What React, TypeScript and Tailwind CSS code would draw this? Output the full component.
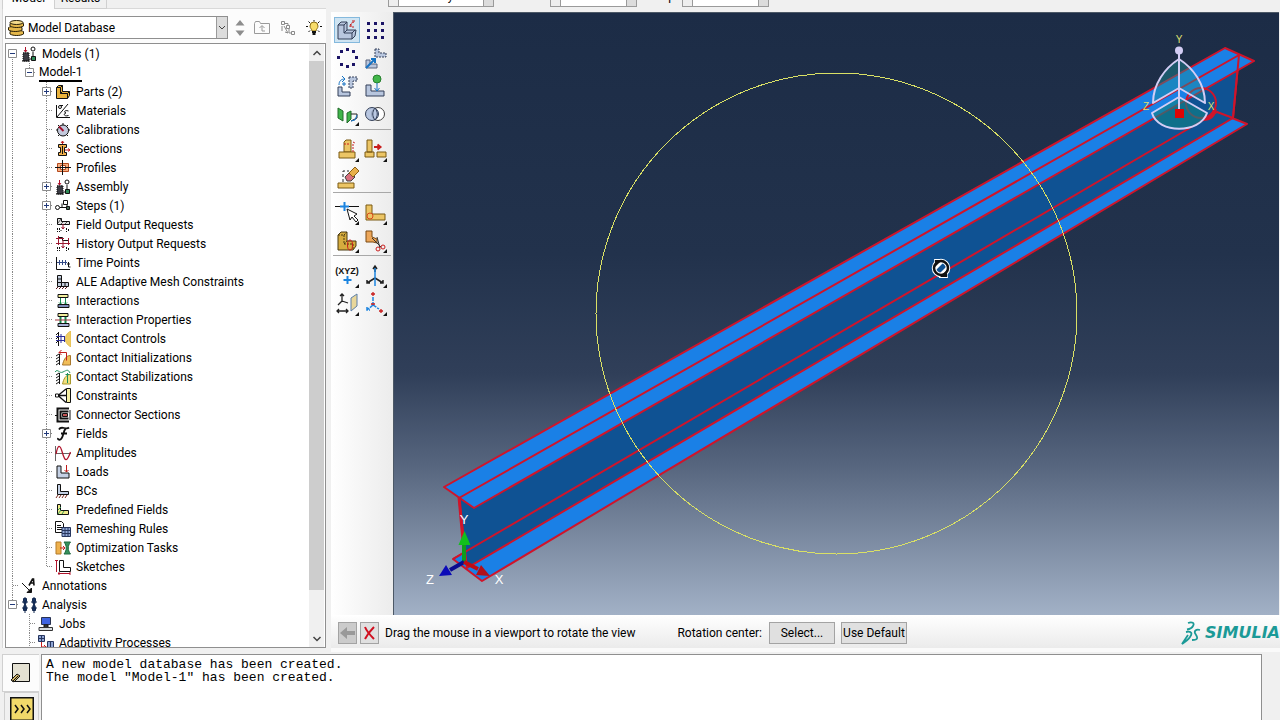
import type { ReactNode } from "react";

const ELL = "M2 2h4v7h8v5H2z";

function Svg16({ children }: { children: ReactNode }) {
  return (
    <svg className="size-4 shrink-0" viewBox="0 0 16 16" fill="none" stroke="#111" aria-hidden="true">
      {children}
    </svg>
  );
}

const assemblyArt = (
  <>
    <path d="M2 7h6v8H2z" fill="#667" strokeDasharray="1 1" />
    <path d="M1 15h8M3 15V6M5 15V6M7 15V6" />
    <path d="M4.500 1v5M3 4l1.500 2L6 4" stroke="#b0122c" />
    <path d="M12 6v5M8 13h3" />
    <circle cx="12" cy="3" r="2" fill="#fff" />
    <path d="M10.500 10.500h4v4h-4z" fill="#2e8b57" />
  </>
);

const analysisArt = (
  <g fill="#1c3f78" stroke="#13294f">
    <path d="M2.500 1.500h3v3l-1 3 1 3v3h-3v-3l1-3-1-3zM1 5h6M1 11h6" />
    <path d="M11.500 1.500h3v3l-1 3 1 3v3h-3v-3l1-3-1-3zM10 5h6M10 11h6M13 0v16M4 0v16" />
  </g>
);

const contactWall = <path d="M4.500 4v11M1 6l3-2M1 9l3-2M1 12l3-2M1 15l3-2" />;

// One 16px glyph for each kind of container in the model tree
const treeIcons: Record<string, ReactNode> = {
  models: assemblyArt,
  assembly: assemblyArt,
  parts: (
    <>
      <path d="M1.500 3.500l2-2h4v6h7v4l-2 3h-11z" fill="#e9b23c" />
      <path d="M1.500 3.500h4v6h7v5M5.500 3.500l2-2M12.500 9.500l2-2M5.500 9.500l2-2" />
    </>
  ),
  materials: (
    <>
      <path d="M1.500 2v12.500H15M2 14L13 1" />
      <circle cx="5" cy="4" r="1.500" />
      <path d="M5 2.500h3M13.500 8c-4-1.500-5 1.500-2.500 2-3 .5-2 4 2.500 2.500" />
    </>
  ),
  calibrations: (
    <>
      <circle cx="8" cy="8.500" r="5.500" fill="#c3c9dc" />
      <path d="M8 1v2M1 8h2M13 8h2M3 3l1.500 1.500M13 3l-1.500 1.500M3 14l1.500-1.500M13 14l-1.500-1.500" />
      <path d="M4 4.500l4.500 4.500" stroke="#a3102c" strokeWidth="2" />
    </>
  ),
  sections: (
    <>
      <path d="M3.500 3.500h8v3h-2v5h2v3h-8v-3h2v-5h-2z" fill="#f3b04a" />
      <path d="M7.500 0v3M6 2l1.500-2L9 2M10 9h5M13 7.500L15 9l-2 1.500" stroke="#c02020" />
      <path d="M7.500 5v8" />
    </>
  ),
  profiles: (
    <>
      <path d="M2.500 3.500h11v8h-11z" fill="#f4b183" stroke="#b5481c" />
      <path d="M5.500 5.500h5v4h-5z" fill="#fff" stroke="#b5481c" />
      <path d="M7.500 0v15M0 7.500h16" />
    </>
  ),
  steps: (
    <>
      <path d="M5 9.500h6M7 9V5.500M12 6v3" />
      <circle cx="2.500" cy="9.500" r="2" fill="#fff" />
      <path d="M8.500 2.500h4v4h-4z" fill="#fff" />
      <path d="M11.500 8.500h3v3h-3z" fill="#456b56" />
    </>
  ),
  fieldOutput: (
    <>
      <path d="M2.500 1.500h4v3h8v3h-12z" fill="#e2e2e2" />
      <path d="M3 6l3-4M6 7l2-2M10 7l2-2" stroke="#555" />
      <path d="M8 7v5M6.500 10L8 12l1.500-2" stroke="#9c1730" />
      <path d="M2.500 11v4M4.500 11v4M11.500 11v4M13.500 12v2M5.500 13.500h1" strokeDasharray="2 1" />
    </>
  ),
  historyOutput: (
    <>
      <path d="M3.500 1.500v6h10v-3h-6v-3z" />
      <path d="M1 2.500h8M3.500 0v9M8 4v8M6.500 10L8 12l1.500-2M1 7.500h14M13.500 2v7" stroke="#9c1730" />
      <path d="M2.500 11v4M4.500 11v4M11.500 11v4M13.500 12v2" strokeDasharray="2 1" />
    </>
  ),
  timePoints: (
    <>
      <path d="M1.500 2v12.500H15" />
      <path d="M2 7.500h10M4.500 5v5M7.500 5v5M10.500 5v5" stroke="#334a86" />
      <path d="M13.500 7v5h2M12 9h3" />
    </>
  ),
  ale: (
    <>
      <path d="M2.500 1.500h4v7h7v4h-11z" fill="#c5cfdf" />
      <path d="M2.500 5h4M2.500 8.500h4M6.500 8.500v4M10 8.500v4" />
      <path d="M1 15l2-2M4 15l2-2M7 15l2-2M10 15l2-2" stroke="#5b1720" />
    </>
  ),
  interactions: (
    <>
      <path d="M3 1.500h10v3H3z" fill="#f2ee9c" />
      <path d="M5.500 5v6M10.500 5v6M4 9.500l1.500 1.500L7 9.500M9 9.500l1.500 1.500 1.500-1.500" stroke="#158a4c" />
      <path d="M3 11.500h11v3H3z" fill="#7f8db9" />
    </>
  ),
  interactionProps: (
    <>
      <path d="M3 1.500h10v3H3z" fill="#f2ee9c" />
      <path d="M5.500 5v6M10.500 5v6" stroke="#158a4c" strokeWidth="2" />
      <path d="M3 11.500h11v3H3z" fill="#a9b2d6" />
      <path d="M0 8h16" stroke="#a0343c" />
    </>
  ),
  contactControls: (
    <>
      <path d="M16 0c-7 3-8 12 0 16z" fill="#f0cd62" stroke="#e2ba4e" />
      <path d="M3.500 1v14M1 4l2-2M1 8l2-2M1 12l2-2" />
      <path d="M1 5.500h9M1 9.500h9M6 3v9M9.500 5v6" stroke="#2d2f9a" />
    </>
  ),
  contactInit: (
    <>
      <path d="M15.500 5.500c-5 0-7 5-8 9.500h8z" fill="#f0bd58" stroke="#a8772c" />
      {contactWall}
      <path d="M4 2.500h7.500v8M6.500 0L4 2.500 6.500 5" stroke="#c21d1d" />
    </>
  ),
  contactStab: (
    <>
      <path d="M15.500 5.500c-5 0-7 5-8 9.500h8z" fill="#f2e07e" stroke="#a8972c" />
      {contactWall}
      <path d="M0 3c3-4 4 2 8 0s5-3 7 1M12.500 4v10M10.500 5.500h4" stroke="#1f8f5c" />
    </>
  ),
  constraints: (
    <>
      <path d="M11.500.5h4v14h-4z" fill="#f5efa4" />
      <path d="M11 1L3 7.500l8 7M4 7.500h7" strokeWidth="1.300" />
      <path d="M.5 6h3v3h-3z" fill="#fff" />
    </>
  ),
  connector: (
    <>
      <path d="M14 1.500H2.500v13H14M13.500 4.500H5.500v7h8" strokeWidth="2" />
      <path d="M0 8.500h3M15 3v10" />
      <path d="M7.500 6.500h5v3h-5z" fill="#c35454" />
    </>
  ),
  fields: (
    <path d="M4 3.500c1-2 3-2 5-1.500s4 .5 5-.5M11 2C8 5 8.500 12 5.500 13.500c-1.500.7-3-.2-2.500-1.500M6 7.500h6" strokeWidth="1.800" />
  ),
  amplitudes: (
    <>
      <path d="M.5 1v15M0 8.500h16" stroke="#666" />
      <path d="M1 9C3-1 5-1 7.500 8S12 17 15.500 7" stroke="#b0142c" strokeWidth="1.300" />
    </>
  ),
  loads: (
    <>
      <path d={ELL} fill="#c4d0e4" />
      <path d="M11.500 1v7M9.500 6l2 2 2-2" stroke="#c11a1a" />
    </>
  ),
  bcs: (
    <>
      <path d="M2.500 1.500h3v7h8v3h-11z" fill="#c4d0e4" />
      <path d="M1 15l2-3M4 15l2-3M7 15l2-3M10 15l2-3" stroke="#7b2a20" />
    </>
  ),
  predefined: (
    <>
      <path d="M2.500 2.500h3v6h8v4h-11z" fill="#efe98a" />
      <path d="M3 8l3-3M3 12l3-4M7 12l2-3" stroke="#3a9a54" />
    </>
  ),
  remeshing: (
    <>
      <path d="M.5.5h6l2 2v9h-8z" fill="#fff" />
      <path d="M2 4.500h4M2 6.500h5M2 8.500h5" />
      <path d="M7 6.500h8.500v9H7zM10 6.500v9M13 6.500v9M7 9.500h8.500M7 12.500h8.500" fill="#8fa5d4" stroke="#27365e" />
    </>
  ),
  optimization: (
    <>
      <path d="M1 2h5v12H1z" fill="#eeb14d" stroke="#b37b28" />
      <path d="M5 8h5M8 6l2 2-2 2" stroke="#c81d1d" />
      <path d="M9 2h6.500c-3 4-3 8 0 12H9c3-4 3-8 0-12z" fill="#35915c" stroke="#206a40" />
    </>
  ),
  sketches: (
    <>
      <path d="M4.500 1.500h4v7h7v4h-11z" fill="#fff" />
      <path d="M1.500 1v12M0 1.500h3M3 14.500h12M4 13v3M15 13v3" stroke="#b0142c" />
    </>
  ),
  annotations: (
    <>
      <path d="M1 5l9 9M10.500 10v4.500H6z" fill="#111" />
      <path d="M8 7.500L11.500 1h1l.5 6.500M9 5h4" strokeWidth="1.600" />
    </>
  ),
  analysis: analysisArt,
  jobs: (
    <>
      <path d="M3.500 1.500h9v7h-9z" fill="#3f63e0" stroke="#2a3350" />
      <path d="M6 9h4v2H6z" fill="#555" />
      <path d="M1 11.500h13.500v3H1z" fill="#d9dde0" stroke="#333" />
    </>
  ),
  adaptivity: (
    <>
      <path d="M.5.5h6v6h-6zM3.500.5v6M.5 3.500h6M9.500 6.500h6v6h-6zM12.500 6.500v6" fill="#8fa5d4" stroke="#27365e" />
      <path d="M3.500 7v5h5M6 10l2 2-2 2" stroke="#c81d1d" />
    </>
  ),
};

// Guide cells: "|" line passing by, "." nothing, "b" starts here, "t" branches, "l" last branch
type Row = { guides: string; label: string; icon?: string; state?: "open" | "closed"; current?: boolean };

const rows: Row[] = [
  { guides: "b", label: "Models (1)", icon: "models", state: "open" },
  { guides: "|l", label: "Model-1", state: "open", current: true },
  { guides: "|.t", label: "Parts (2)", icon: "parts", state: "closed" },
  { guides: "|.t", label: "Materials", icon: "materials" },
  { guides: "|.t", label: "Calibrations", icon: "calibrations" },
  { guides: "|.t", label: "Sections", icon: "sections" },
  { guides: "|.t", label: "Profiles", icon: "profiles" },
  { guides: "|.t", label: "Assembly", icon: "assembly", state: "closed" },
  { guides: "|.t", label: "Steps (1)", icon: "steps", state: "closed" },
  { guides: "|.t", label: "Field Output Requests", icon: "fieldOutput" },
  { guides: "|.t", label: "History Output Requests", icon: "historyOutput" },
  { guides: "|.t", label: "Time Points", icon: "timePoints" },
  { guides: "|.t", label: "ALE Adaptive Mesh Constraints", icon: "ale" },
  { guides: "|.t", label: "Interactions", icon: "interactions" },
  { guides: "|.t", label: "Interaction Properties", icon: "interactionProps" },
  { guides: "|.t", label: "Contact Controls", icon: "contactControls" },
  { guides: "|.t", label: "Contact Initializations", icon: "contactInit" },
  { guides: "|.t", label: "Contact Stabilizations", icon: "contactStab" },
  { guides: "|.t", label: "Constraints", icon: "constraints" },
  { guides: "|.t", label: "Connector Sections", icon: "connector" },
  { guides: "|.t", label: "Fields", icon: "fields", state: "closed" },
  { guides: "|.t", label: "Amplitudes", icon: "amplitudes" },
  { guides: "|.t", label: "Loads", icon: "loads" },
  { guides: "|.t", label: "BCs", icon: "bcs" },
  { guides: "|.t", label: "Predefined Fields", icon: "predefined" },
  { guides: "|.t", label: "Remeshing Rules", icon: "remeshing" },
  { guides: "|.t", label: "Optimization Tasks", icon: "optimization" },
  { guides: "|.l", label: "Sketches", icon: "sketches" },
  { guides: "t", label: "Annotations", icon: "annotations" },
  { guides: "l", label: "Analysis", icon: "analysis", state: "open" },
  { guides: ".t", label: "Jobs", icon: "jobs" },
  { guides: ".t", label: "Adaptivity Processes", icon: "adaptivity" },
];

const guidePaths: Record<string, string> = {
  "|": "M6.500 0V19",
  ".": "",
  b: "M6.500 9V19",
  t: "M6.500 0V19M7 9.500H13",
  l: "M6.500 0V9M7 9.500H13",
};

function TreeRow({ row }: { row: Row }) {
  const cells = row.guides.split("");
  return (
    <li className="flex h-[19px] items-center" role="treeitem" aria-expanded={row.state ? row.state === "open" : undefined}>
      {cells.map((kind, i) => {
        const own = i === cells.length - 1;
        return (
          <span key={i} className={own ? "relative h-[19px] w-[15px] shrink-0" : "h-[19px] w-[17px] shrink-0"}>
            <svg className="block h-[19px] w-[15px]" viewBox="0 0 15 19" aria-hidden="true">
              <path d={guidePaths[kind]} stroke="#888" strokeDasharray="1 1" fill="none" />
            </svg>
            {own && row.state && (
              <button
                type="button"
                aria-label={row.state === "open" ? `Collapse ${row.label}` : `Expand ${row.label}`}
                className="absolute top-[5px] left-[2px] size-[9px] bg-white"
              >
                <svg className="block size-[9px]" viewBox="0 0 9 9" fill="none">
                  <path d="M.5.5h8v8h-8z" stroke="#8c8c8c" />
                  <path d={row.state === "open" ? "M2 4.500h5" : "M2 4.500h5M4.500 2v5"} stroke="#223a7a" />
                </svg>
              </button>
            )}
          </span>
        );
      })}
      {row.icon && <Svg16>{treeIcons[row.icon]}</Svg16>}
      <span className={row.current ? "ml-px border-b-2 border-black leading-4" : "ml-[5px] leading-4"}>{row.label}</span>
    </li>
  );
}

function ModelTree() {
  return (
    <div className="ml-0.5 flex min-h-0 flex-1 border border-[#8f8f8f] bg-white">
      <ul className="min-h-0 flex-1 overflow-hidden whitespace-nowrap" role="tree" aria-label="Model tree">
        {rows.map((row) => (
          <TreeRow key={row.label} row={row} />
        ))}
      </ul>
      <div className="mr-px flex w-[15px] flex-col bg-[#f0f0f0]">
        <button type="button" aria-label="Scroll up" className="grid h-[17px] place-items-center">
          <svg className="h-2 w-2.5" viewBox="0 0 10 8" fill="none" stroke="#444" strokeWidth="1.500">
            <path d="M1.500 6L5 2.500 8.500 6" />
          </svg>
        </button>
        <div className="min-h-0 flex-1">
          <div className="h-[93%] bg-[#cdcdcd]" />
        </div>
        <button type="button" aria-label="Scroll down" className="grid h-[17px] place-items-center">
          <svg className="h-2 w-2.5" viewBox="0 0 10 8" fill="none" stroke="#444" strokeWidth="1.500">
            <path d="M1.500 2L5 5.500 8.500 2" />
          </svg>
        </button>
      </div>
    </div>
  );
}

function DatabaseBar() {
  return (
    <div className="flex items-center px-0.5 pt-[7px] pb-1">
      <div className="flex h-[23px] w-[223px] shrink-0 items-center border border-[#8f8f8f] bg-white pl-0.5">
        <svg className="size-4 shrink-0" viewBox="0 0 16 16" fill="#e4b74a" stroke="#2a2008" aria-hidden="true">
          <path d="M2 11.500c2-1.500 11-1.500 13.500 0v2.500c-3 2-10.500 2-13.500 0z" />
          <path d="M.5 7.500c2-1.500 11-1.500 13.500 0V10c-3 2-10.500 2-13.500 0z" />
          <path d="M2 3.500c2-1.500 11-1.500 13.500 0V6c-3 2-10.500 2-13.500 0z" />
          <ellipse cx="8.500" cy="2.500" rx="6.500" ry="2" fill="#f5dc8c" />
        </svg>
        <select aria-label="Tree root" className="h-full min-w-0 flex-1 appearance-none bg-white pl-1 outline-none">
          <option>Model Database</option>
        </select>
        <span className="grid h-full w-[11px] place-items-center border-l border-[#9a9a9a] bg-[#dcdcdc]">
          <svg className="h-1.5 w-2" viewBox="0 0 8 6" fill="none" stroke="#444">
            <path d="M1 1l3 3 3-3" />
          </svg>
        </span>
      </div>
      <button type="button" aria-label="Move up or down" className="ml-1 grid size-4 place-items-center">
        <svg className="h-4 w-2.5" viewBox="0 0 10 16" fill="#8d8d8d">
          <path d="M5 0l4.500 5.500h-9zM5 16l4.500-5.500h-9z" />
        </svg>
      </button>
      <button type="button" aria-label="Up one level" className="ml-1.5 size-4">
        <svg className="size-4" viewBox="0 0 16 16" fill="none" stroke="#9a9a9a">
          <path d="M.5 3.500l1-2h4l1 2h9v10H.5zM8 11V6M5.500 8L8 5.500 10.500 8M8 11h3" />
        </svg>
      </button>
      <button type="button" aria-label="Filter" className="ml-2.5 size-4">
        <svg className="size-4" viewBox="0 0 16 16" fill="none" stroke="#8a8a8a">
          <path d="M1.500 1.500h3v3h-3zM6.500 5.500h3v3h-3zM11.500 11.500h3v3h-3zM4.500 3.500H8v2M9 8.500v4.500h2.500M2 6v5M4 6l4 7M8 13l-3-1" />
        </svg>
      </button>
      <button type="button" aria-label="Tips" className="ml-2.5 size-4">
        <svg className="size-4" viewBox="0 0 16 16" fill="none" stroke="#111">
          <path d="M8 0v1.500M0 6.500h2M14 6.500h2M2.500 1.500l1.500 1.500M13.500 1.500L12 3M2.500 12L4 10.500M13.500 12L12 10.500" />
          <path d="M6 11c0-2-2-2.500-2-5a4 4 0 018 0c0 2.500-2 3-2 5z" fill="#f7dc6a" stroke="#8a6c14" />
          <path d="M6 12h4M6.500 14h3" strokeWidth="2" />
        </svg>
      </button>
    </div>
  );
}

function Sidebar() {
  return (
    <aside className="flex w-[331px] shrink-0 flex-col pr-[5px] pl-0.5">
      <div className="flex h-[9px] items-end overflow-hidden" role="tablist">
        <button type="button" role="tab" aria-selected="true" className="h-5 w-[52px] shrink-0 border-l border-[#d0d0d0] bg-[#fcfcfc] pb-0.5 leading-4">
          Model
        </button>
        <button type="button" role="tab" aria-selected="false" className="h-5 w-[53px] shrink-0 border-r border-b border-l border-[#d0d0d0] bg-[#f0f0f0] pb-0.5 leading-4">
          Results
        </button>
        <span className="h-px flex-1 bg-[#d9d9d9]" />
      </div>
      <div className="mb-1 flex min-h-0 flex-1 flex-col border-l border-[#d9d9d9] bg-[#fcfcfc]">
        <DatabaseBar />
        <ModelTree />
      </div>
    </aside>
  );
}

type ContextSelectProps = { label: string; value: string; labelWidth: string; boxWidth: string };

function ContextSelect({ label, value, labelWidth, boxWidth }: ContextSelectProps) {
  return (
    <label className="flex shrink-0 items-center gap-1">
      <span className={`${labelWidth} text-right`}>{label}</span>
      <span className={`${boxWidth} flex h-[22px] border border-[#9a9a9a] bg-white`}>
        <span className="grid w-2.5 place-items-end border-r border-[#9a9a9a] bg-[#eee] pb-1">
          <svg className="h-1.5 w-2" viewBox="0 0 8 6">
            <path d="M1 0h6L4 4z" fill="#222" />
          </svg>
        </span>
        <select className="min-w-0 flex-1 appearance-none bg-transparent px-0.5 outline-none">
          <option>{value}</option>
        </select>
        <span className="w-2.5 border-l border-[#9a9a9a] bg-[#dcdcdc]" />
      </span>
    </label>
  );
}

function ContextBar() {
  return (
    <div className="flex h-3 items-end overflow-hidden bg-[#f0f0f0] pb-[5px]">
      <ContextSelect label="Module:" value="Assembly" labelWidth="w-[53px]" boxWidth="w-[106px]" />
      <ContextSelect label="Model:" value="Model-1" labelWidth="w-[52px]" boxWidth="w-[87px]" />
      <ContextSelect label="Step:" value="Initial" labelWidth="w-[41px]" boxWidth="w-[87px]" />
    </div>
  );
}

const more = <path d="M24 20v4h-4z" fill="#111" stroke="none" />;
const steel = "#b8c6de";
const gold = "#ecc565";

type Tool = { name: string; art: ReactNode; active?: boolean };

const toolGroups: Tool[][] = [
  [
    {
      name: "Create Instance",
      active: true,
      art: (
        <>
          <path d="M3 7l3-3h6v8h9l-1 6-3 3H3z" fill={steel} stroke="#333f58" />
          <path d="M3 7h6v8h8v6M9 7l3-3M9 15l3-3M17 15l3-3" stroke="#333f58" />
          <path d="M15 9c0-3 1-4 4-5M16 6v3h3M17 3h3" stroke="#c81d1d" strokeDasharray="3 1" />
        </>
      ),
    },
    {
      name: "Linear Pattern",
      art: (
        <g fill="#1b1466" stroke="none">
          {[4, 11, 18].flatMap((y) => [4, 11, 18].map((x) => <rect key={`${x}-${y}`} x={x} y={y} width="3" height="3" />))}
        </g>
      ),
    },
    {
      name: "Radial Pattern",
      art: (
        <g fill="#1b1466" stroke="none">
          {[[11, 2], [17, 4], [20, 10], [17, 17], [11, 19], [5, 17], [2, 10], [5, 4]].map(([x, y]) => (
            <rect key={`${x}-${y}`} x={x} y={y} width="3" height="3" />
          ))}
        </g>
      ),
    },
    {
      name: "Translate Instance",
      art: (
        <>
          <path d="M12 3h4v4h7v4H12z" fill={steel} stroke="#333f58" strokeDasharray="2 1" />
          <path d="M3 14h4v4h7v4H3z" fill={steel} stroke="#56627c" />
          <path d="M3 22l9-9M8 13h4v4" stroke="#1673c4" strokeWidth="2" />
        </>
      ),
    },
    {
      name: "Rotate Instance",
      art: (
        <>
          <path d="M3 13h4v5h8v4H3z" fill={steel} stroke="#333f58" />
          <path d="M14 3h8v4h-4v7h-4z" fill={steel} stroke="#333f58" strokeDasharray="2 1" />
          <path d="M4 11c0-4 2-6 6-6M7 2l3 3-3 3M9 8v4M7 10h4" stroke="#1673c4" />
        </>
      ),
    },
    {
      name: "Translate To",
      art: (
        <>
          <path d="M3 11h5v6h13v5H3z" fill={steel} stroke="#333f58" />
          <circle cx="14" cy="5" r="4" fill="#41b649" stroke="#27802e" />
          <path d="M14 9v7M11.500 14l2.500 3 2.500-3" stroke="#1673c4" />
        </>
      ),
    },
    {
      name: "Create Constraint",
      art: (
        <>
          <path d="M3 6l5 3v10l-5-3z" fill="#3fb54a" stroke="#226b2a" />
          <path d="M12 11l4-2v8l-4 4z" fill="#3fb54a" stroke="#226b2a" />
          <path d="M16 12h6v4l-6 3" stroke="#222" />
          <path d="M22 13l-2 5-4 1" stroke="#1673c4" />
          {more}
        </>
      ),
    },
    {
      name: "Merge/Cut Instances",
      art: (
        <>
          <circle cx="15" cy="12" r="6.500" fill="#fff" stroke="#444" />
          <circle cx="9" cy="12" r="6.500" fill="#a9badb" fillOpacity=".8" stroke="#333f58" />
          <path d="M12 6c-3 4-3 8 0 12M12 6c3 4 3 8 0 12" stroke="#333f58" />
        </>
      ),
    },
  ],
  [
    {
      name: "Create Solid",
      art: (
        <>
          <path d="M9 4l2-2h5v12H9z" fill={gold} stroke="#7a5a14" />
          <path d="M4 14h16v6H4z" fill={gold} stroke="#7a5a14" />
          <path d="M9 6h5M18 6v9M18 4l2 1" stroke="#c81d1d" strokeDasharray="2 1" />
          {more}
        </>
      ),
    },
    {
      name: "Create Cut",
      art: (
        <>
          <path d="M4 2h5v12H4zM2 14h9v5H2zM14 14h9v5h-9z" fill={gold} stroke="#7a5a14" />
          <path d="M11 9h6M14.500 6.500L17.500 9l-3 2.500" stroke="#c81d1d" strokeWidth="2" />
          {more}
        </>
      ),
    },
    {
      name: "Remove Feature",
      art: (
        <>
          <path d="M3 17h16v5H3z" fill={gold} stroke="#7a5a14" />
          <path d="M8 16V5h6" strokeDasharray="3 2" stroke="#222" />
          <path d="M10 11l5-5 5 5-4 4h-4z" fill="#d9707e" stroke="#444" />
          <path d="M14 7l6-6 4 4-6 6z" fill="#e9b04a" stroke="#8a5f18" />
        </>
      ),
    },
  ],
  [
    {
      name: "Partition Edge",
      art: (
        <>
          <path d="M0 5.500h24" stroke="#111" />
          <path d="M9.500 1v9M5 5.500h9" stroke="#1b84e0" strokeWidth="2" />
          <path d="M12 8l3 11 2-3 4 5 2-2-4-4 3-2z" fill="#fff" stroke="#111" />
          {more}
        </>
      ),
    },
    {
      name: "Partition Face",
      art: (
        <>
          <path d="M3 4h6v9h13v6H3z" fill={gold} stroke="#7a5a14" />
          <circle cx="7" cy="15" r="3" stroke="#d8481c" />
          {more}
        </>
      ),
    },
    {
      name: "Partition Cell",
      art: (
        <>
          <path d="M3 6l3-3h6v9h9v5l-3 4H3z" fill="#d6ac3e" stroke="#4b3a10" />
          <path d="M3 6h6v9h9v6M9 6l3-3M9 15l3-3" stroke="#4b3a10" strokeDasharray="2 1" />
          <ellipse cx="15" cy="16" rx="2.500" ry="5" stroke="#c81d1d" />
          {more}
        </>
      ),
    },
    {
      name: "Trim",
      art: (
        <>
          <path d="M3 2h6v6l5 2v4l-4-1H3z" fill="#eda75a" stroke="#7a4a14" />
          <path d="M9 9l9 9M14 8l3 11" stroke="#333" />
          <circle cx="15" cy="20" r="2" stroke="#c81d1d" />
          <circle cx="20" cy="18" r="2" stroke="#c81d1d" />
          {more}
        </>
      ),
    },
  ],
  [
    {
      name: "Create Datum Point",
      art: (
        <>
          <text x="12" y="10" textAnchor="middle" fill="#111" stroke="none" className="font-['Liberation_Sans'] text-[9px] font-bold">
            (XYZ)
          </text>
          <path d="M12.500 12v8M8.500 16h8" stroke="#1b84e0" strokeWidth="2" />
          {more}
        </>
      ),
    },
    {
      name: "Create Datum Axis",
      art: (
        <>
          <path d="M12 14L4 19M12 14l8 5M4 16v3h3M20 16v3h-3M12 8V2M10 5l2-3 2 3" stroke="#222" strokeWidth="1.500" />
          <path d="M12 4v18" stroke="#1b84e0" strokeWidth="1.500" />
          {more}
        </>
      ),
    },
    {
      name: "Create Datum Plane",
      art: (
        <>
          <path d="M7 10V2M5 4l2-2 2 2M7 9l6 2M7 9l-4 4M2 19h11M4 17l-2 2 2 2M11 17l2 2-2 2" stroke="#222" strokeWidth="1.300" />
          <path d="M16 6l6-4v12l-6 5z" fill="#e9d79a" stroke="#5d7fa8" />
          {more}
        </>
      ),
    },
    {
      name: "Create Datum CSYS",
      art: (
        <>
          <path d="M10 13l-6 5M10 13l6 4M4 15v3h3M10 5v8" stroke="#1b84e0" strokeWidth="1.500" strokeDasharray="4 1" />
          <path d="M10 0v4M8 2h4M18 17v4M16 19h4M8 12h4" stroke="#c81d1d" strokeWidth="1.300" />
          {more}
        </>
      ),
    },
  ],
];

function Toolbox() {
  return (
    <div className="w-[62px] shrink-0 divide-y divide-[#a8a8a8] bg-linear-to-r from-white to-[#ececec] px-0.5 pt-1">
      {toolGroups.map((group) => (
        <div key={group[0].name} className="grid grid-cols-[28px_28px] pt-1.5 first:pt-0 first:pb-px">
          {group.map((tool) => (
            <button
              key={tool.name}
              type="button"
              aria-label={tool.name}
              title={tool.name}
              className="grid h-7 place-items-center"
            >
              <svg
                className={tool.active ? "size-[26px] border border-[#84b9dd] bg-[#cfe4f2]" : "size-6"}
                viewBox="0 0 24 24"
                fill="none"
              >
                {tool.art}
              </svg>
            </button>
          ))}
        </div>
      ))}
    </div>
  );
}

function Viewport() {
  return (
    <div className="mr-px min-w-0 flex-1 border-t border-l border-[#4c5866] bg-[linear-gradient(#1c2c46_0%,#22324c_40%,#303f59_60%,#56657e_75%,#a2b1c6_100%)] font-['Liberation_Sans']">
      <svg className="block size-full" viewBox="394 13 885 602" preserveAspectRatio="xMidYMid slice" fill="none" role="img" aria-label="I-beam instance">
        <g stroke="#d0142a" strokeWidth="2" strokeLinejoin="round">
          <path d="M453 559L1217 112L1247 124L482 581z" fill="#1a80e6" />
          <path d="M459 498L1239 55L1233 118L467 568z" fill="#0f5293" />
          <path d="M453 559L1217 112L1233 118" />
          <path d="M444 487L1225 48L1254 61L474 508z" fill="#1a80e6" />
          <path d="M459 498L1239 55L1233 118" />
          <path d="M459 497l4 43" strokeWidth="3" />
          <circle cx="1201" cy="103" r="15" />
          <path d="M1215 109c-1 6-5 10-12 10" strokeWidth="4" />
        </g>

        <circle cx="836.5" cy="313.500" r="240.500" stroke="#d9e065" shapeRendering="crispEdges" />

        <g stroke="#d3cdf5" strokeWidth="2" strokeLinejoin="round">
          <path d="M1179 59C1165 68 1153 84 1153 103L1179 88L1205 103C1205 84 1193 68 1179 59z" fill="#1c8f96" fillOpacity=".45" />
          <path d="M1152 113L1179 97L1207 113C1200 134 1158 134 1152 113z" fill="#107f86" fillOpacity=".65" />
          <path d="M1179 52V112" />
        </g>
        <circle cx="1179" cy="50.500" r="4" fill="#d3cdf5" />
        <path d="M1175 109h9v9h-9z" fill="#dc0505" />
        <g fill="#dfe070" textAnchor="middle" className="text-[10px]">
          <text x="1179" y="43">Y</text>
          <text x="1146" y="110">Z</text>
          <text x="1211" y="110">X</text>
        </g>

        <g strokeWidth="4">
          <path d="M464 562V543" stroke="#0f9c1c" />
          <path d="M464 562l-14 8" stroke="#0a0a90" />
          <path d="M464 562l14 7" stroke="#c00c14" />
        </g>
        <path d="M464.500 531l6 14h-12z" fill="#11c01c" />
        <path d="M439 576l7-11 6 10z" fill="#0b0bb8" />
        <path d="M490 576l-14-1 5-10z" fill="#b0101a" />
        <g fill="#fff" textAnchor="middle" className="text-[13px]">
          <text x="464" y="524">Y</text>
          <text x="430" y="584">Z</text>
          <text x="499" y="584">X</text>
        </g>

        {/* rotate cursor */}
        <g transform="translate(941 268)">
          <circle r="7" stroke="#fff" strokeWidth="4.500" />
          <path d="M-7-9H2v4l-7 7zM7 10h-9V6l7-7z" fill="#fff" />
          <circle r="7" stroke="#111" strokeWidth="2.500" />
          <path d="M-6-8h7l-7 7zM6 9h-7l7-7z" fill="#111" />
        </g>
      </svg>
    </div>
  );
}

function SimuliaLogo() {
  return (
    <div className="flex items-center gap-1 text-[#1b9a97]">
      <svg className="h-6 w-5" viewBox="0 0 20 24" fill="none" stroke="currentColor" strokeWidth="1.800" aria-hidden="true">
        <path d="M7 2c4-1.500 7 0 5 3-1 2-3 3-6 3.500M5 11c5-1 7 1 4 5-2 3-5 5-8 7l6-9M19 9c-4-1-6.500 1-4.500 4s3.500 6-3.500 6" />
      </svg>
      <span className="font-['DejaVu_Sans'] text-[16px] leading-5 font-bold italic">SIMULIA</span>
    </div>
  );
}

function PromptArea() {
  const box = "h-[22px] border border-[#a3a3a3]";
  return (
    <div className="flex h-[33px] items-center bg-linear-to-b from-white to-[#ebebeb] pt-0.5 pl-[7px]">
      <button type="button" aria-label="Previous step" disabled className={`${box} w-[19px] bg-[#cbcbcb]`}>
        <svg className="size-full" viewBox="0 0 17 20" fill="#999">
          <path d="M1 10l7-6v4h8v4H8v4z" />
        </svg>
      </button>
      <button type="button" aria-label="Cancel procedure" className={`${box} ml-[3px] w-[19px] bg-[#e0e0e0]`}>
        <svg className="size-full" viewBox="0 0 17 20" fill="none" stroke="#d01020" strokeWidth="2">
          <path d="M4 4c2 5 5 8 9 12M13 4C9 8 6 12 4 16" />
        </svg>
      </button>
      <p className="ml-1.5">Drag the mouse in a viewport to rotate the view</p>
      <span className="ml-[42px]">Rotation center:</span>
      <button type="button" className={`${box} ml-[7px] w-[66px] bg-[#e0e0e0]`}>Select...</button>
      <button type="button" className={`${box} ml-1.5 w-[66px] bg-[#e0e0e0] whitespace-nowrap`}>Use Default</button>
      <div className="ml-auto">
        <SimuliaLogo />
      </div>
    </div>
  );
}

function MessageArea() {
  return (
    <div className="flex h-[68px] shrink-0 pt-0.5">
      <div className="w-[41px] shrink-0 pl-0.5">
        <button type="button" aria-label="Message area" className="grid h-[38px] w-[37px] place-items-center border border-r-0 border-[#d0d0d0] bg-[#fcfcfc]">
          <svg className="size-5" viewBox="0 0 20 20" fill="none" stroke="#111">
            <path d="M1.500.5h17v18h-17z" fill="#e4e1d2" />
            <path d="M0 17l6-6 3 2-6 6z" fill="#d2b568" />
            <path d="M2 18l5-5" />
          </svg>
        </button>
        <button type="button" aria-label="Command line" className="ml-0.5 grid h-[34px] w-[35px] place-items-center border border-[#d0d0d0] bg-[#f0f0f0]">
          <svg className="h-6 w-6" viewBox="0 0 24 24" fill="none" stroke="#111" strokeWidth="1.500">
            <path d="M.75.75h22.500v22.500H.75z" fill="#f1d96a" />
            <path d="M5 8l3 4-3 4M11 8l3 4-3 4M17 8l3 4-3 4" />
          </svg>
        </button>
      </div>
      <textarea
        readOnly
        aria-label="Messages"
        className="mr-[18px] min-w-0 flex-1 resize-none overflow-hidden border border-b-0 border-[#8f8f8f] bg-white px-1 py-[3px] font-['Liberation_Mono',monospace] text-[13px] leading-[13px] outline-none"
        defaultValue={'A new model database has been created.\nThe model "Model-1" has been created.'}
      />
    </div>
  );
}

export default function App() {
  return (
    <div className="flex h-screen flex-col overflow-hidden bg-[#f0f0f0] font-['Roboto','Noto_Sans',sans-serif] text-[12px] leading-4 text-black">
      <div className="flex min-h-0 flex-1">
        <Sidebar />
        <div className="flex min-w-0 flex-1 flex-col">
          <ContextBar />
          <main className="flex min-h-0 flex-1">
            <Toolbox />
            <Viewport />
          </main>
          <PromptArea />
          <div className="h-1 bg-[#fafafa]" />
        </div>
      </div>
      <MessageArea />
    </div>
  );
}
